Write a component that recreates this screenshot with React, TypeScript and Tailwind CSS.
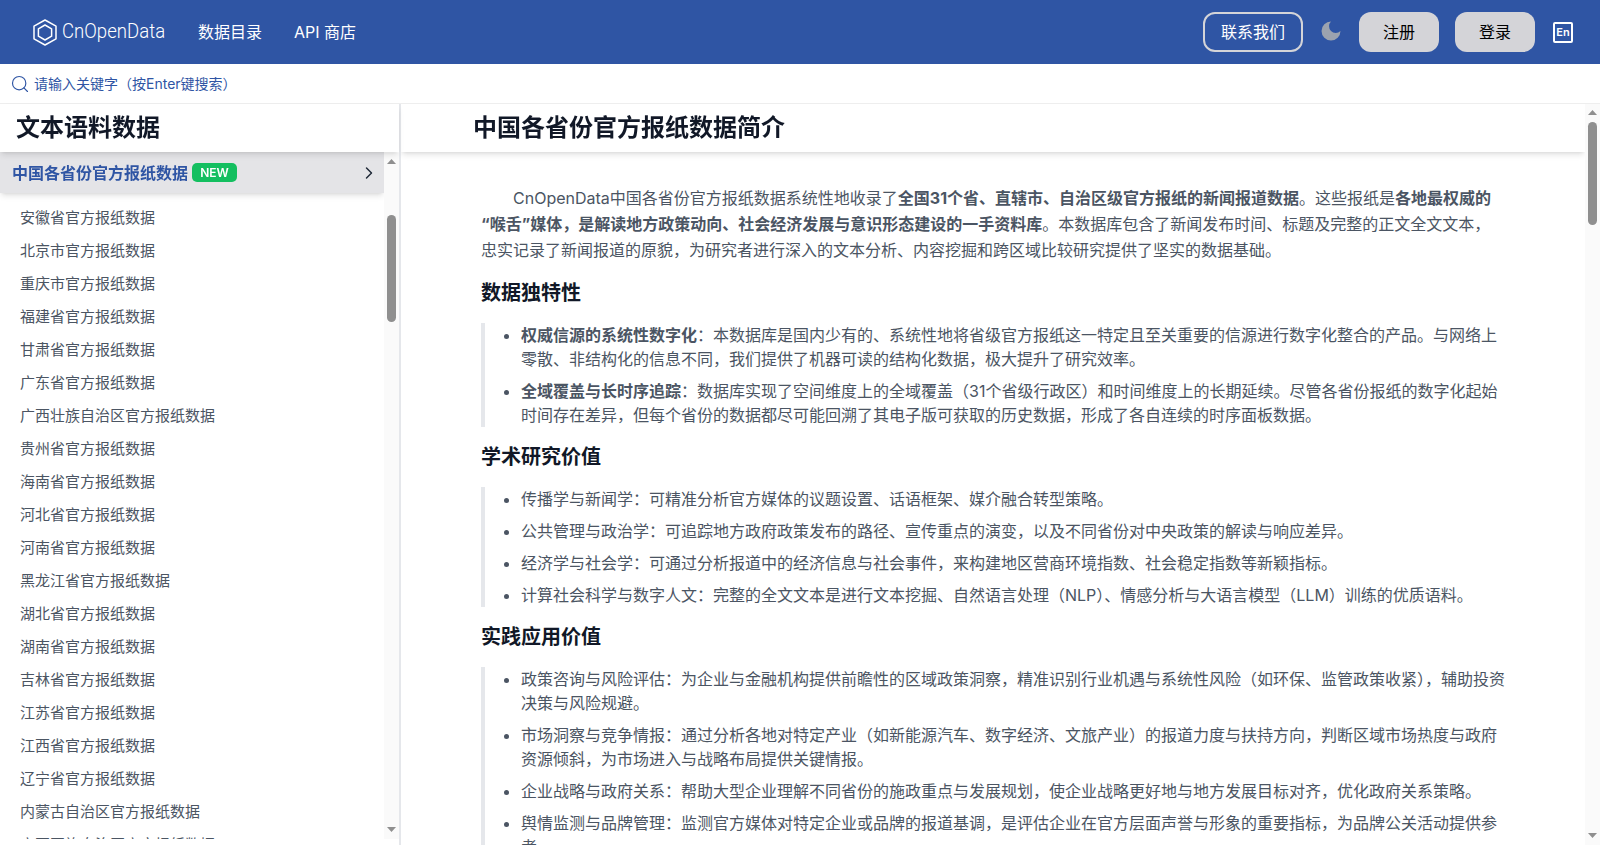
import { ChevronRight, Search } from "lucide-react";

const provinces = [
  "安徽省", "北京市", "重庆市", "福建省", "甘肃省", "广东省", "广西壮族自治区", "贵州省", "海南省", "河北省",
  "河南省", "黑龙江省", "湖北省", "湖南省", "吉林省", "江苏省", "江西省", "辽宁省", "内蒙古自治区", "宁夏回族自治区",
  "青海省", "山东省", "山西省", "陕西省", "上海市", "四川省", "天津市", "西藏自治区", "新疆维吾尔自治区", "云南省", "浙江省",
];

function Logo() {
  return (
    <svg width="24" height="27" viewBox="0 0 24 27" fill="none" stroke="white" strokeWidth="1.5" strokeLinejoin="round">
      <path d="M12 1 L23 7.2 V19.8 L12 26 L1 19.8 V7.2 Z" />
      <path d="M12 6 L18.6 9.8 V17.2 L12 21 L5.4 17.2 V9.8 Z" />
    </svg>
  );
}

function Header() {
  return (
    <header className="h-16 shrink-0 bg-[#2f55a4] flex items-center text-white pl-[33px] pr-[27px]">
      <Logo />
      <span className="ml-[5px] w-[104px] font-['Roboto',sans-serif] font-[350] text-[21px] whitespace-nowrap origin-left scale-x-[.885]">CnOpenData</span>
      <nav className="ml-8 flex items-center gap-8 text-base">
        <a>数据目录</a>
        <a>API 商店</a>
      </nav>
      <div className="flex-1" />
      <button className="h-10 w-[100px] rounded-xl border-2 border-[#d4d4d8] text-base">联系我们</button>
      <svg className="ml-[18px] mb-[3px]" width="20" height="20" viewBox="2.5 2.5 19 19" fill="#9ca3af">
        <path d="M12 3a6 6 0 0 0 9 9 9 9 0 1 1-9-9Z" />
      </svg>
      <button className="ml-[18px] h-10 w-20 rounded-xl bg-[#d4d4d8] text-black text-base">注册</button>
      <button className="ml-4 h-10 w-20 rounded-xl bg-[#d4d4d8] text-black text-base">登录</button>
      <span className="ml-[18px] w-5 h-[21px] rounded-[2px] border-2 border-white flex items-center justify-center text-[11px] leading-none font-semibold">En</span>
    </header>
  );
}

// scrollbar as the page shows it: pale track, two small triangles, rounded thumb
function ScrollTrack({ thumb, inset }: { thumb: string; inset: string }) {
  return (
    <div className={`absolute right-0 bottom-0 w-[15px] bg-[#fafafa] z-20 ${inset}`}>
      <svg className="absolute top-[6px] left-[3px]" width="9" height="5" viewBox="0 0 9 5" fill="#8f8f8f"><path d="M4.5 0 L9 5 H0 Z" /></svg>
      <div className={`absolute left-[3px] w-[9px] rounded-full bg-[#8f8f8f] ${thumb}`} />
      <svg className="absolute bottom-[7px] left-[3px]" width="9" height="5" viewBox="0 0 9 5" fill="#8f8f8f"><path d="M4.5 5 L9 0 H0 Z" /></svg>
    </div>
  );
}

function Sidebar() {
  return (
    <aside className="w-[401px] shrink-0 border-r-2 border-[#e5e7eb] flex flex-col pb-[6px]">
      <h2 className="h-12 shrink-0 pl-4 flex items-center text-2xl font-bold text-[#111827] shadow-md relative z-30 bg-white">文本语料数据</h2>
      <div className="relative flex-1 min-h-0 pr-[15px]">
        <div className="h-full overflow-y-auto [scrollbar-width:none]">
          <div className="sticky top-0 z-10 h-[41px] bg-[#e4e4e7] shadow-md flex items-center pl-3 pr-[5px]">
            <span className="text-base font-semibold text-[#2f55a4]">中国各省份官方报纸数据</span>
            <span className="ml-1 h-[19px] w-[45px] rounded-[5px] bg-[#14bf60] text-white text-[12px] font-semibold flex items-center justify-center">NEW</span>
            <div className="flex-1" />
            <ChevronRight size={20} strokeWidth={1.75} className="text-[#1f2937]" />
          </div>
          <ul className="pt-[9px]">
            {provinces.map((p) => (
              <li key={p} className="h-[33px] pl-5 flex items-center text-[15px] text-[#4b5563]">{p}官方报纸数据</li>
            ))}
          </ul>
        </div>
        <ScrollTrack inset="top-px" thumb="top-[62px] h-[107px]" />
      </div>
    </aside>
  );
}

function Section({ title, items }: { title: string; items: React.ReactNode[] }) {
  return (
    <section className="mt-4">
      <h3 className="text-xl leading-7 font-semibold text-[#111827]">{title}</h3>
      <ul className="mt-4 border-l-4 border-[#e5e7eb] pl-9 list-disc flex flex-col gap-2 leading-6">
        {items.map((item, i) => <li key={i}>{item}</li>)}
      </ul>
    </section>
  );
}

export default function App() {
  return (
    <div className="h-screen pb-4 flex flex-col bg-white font-['Inter','Noto_Sans_CJK_SC',sans-serif] overflow-hidden">
      <Header />
      <div className="h-10 shrink-0 border-b border-[#eeeeee] flex items-center pl-[10px] gap-1 text-[#2f55a4]">
        <Search size={20} strokeWidth={1.4} />
        <input className="flex-1 outline-none text-sm placeholder:text-[#2f55a4]" placeholder="请输入关键字（按Enter键搜索）" />
      </div>
      <div className="flex-1 min-h-0 flex">
        <Sidebar />
        <div className="relative flex-1 min-w-0 pr-[15px]">
          <main className="h-full overflow-y-auto [scrollbar-width:none]">
            <div className="sticky top-0 z-10 h-12 bg-white shadow-md flex items-center">
              <h1 className="w-[1040px] mx-auto text-2xl font-bold text-[#111827]">中国各省份官方报纸数据简介</h1>
            </div>
            <article className="max-w-5xl mx-auto pt-[33px] text-base text-[#4b5563]">
              <p className="indent-8 leading-[26px]">
                CnOpenData中国各省份官方报纸数据系统性地收录了<strong>全国31个省、直辖市、自治区级官方报纸的新闻报道数据</strong>。这些报纸是<strong>各地最权威的<wbr />“喉舌”媒体，是解读地方政策动向、社会经济发展与意识形态建设的一手资料库</strong>。本数据库包含了新闻发布时间、标题及完整的正文全文文本，忠实记录了新闻报道的原貌，为研究者进行深入的文本分析、内容挖掘和跨区域比较研究提供了坚实的数据基础。
              </p>
              <Section title="数据独特性" items={[
                <><strong>权威信源的系统性数字化</strong>：本数据库是国内少有的、系统性地将省级官方报纸这一特定且至关重要的信源进行数字化整合的产品。与网络上零散、非结构化的信息不同，我们提供了机器可读的结构化数据，极大提升了研究效率。</>,
                <><strong>全域覆盖与长时序追踪</strong>：数据库实现了空间维度上的全域覆盖（31个省级行政区）和时间维度上的长期延续。尽管各省份报纸的数字化起始时间存在差异，但每个省份的数据都尽可能回溯了其电子版可获取的历史数据，形成了各自连续的时序面板数据。</>,
              ]} />
              <Section title="学术研究价值" items={[
                "传播学与新闻学：可精准分析官方媒体的议题设置、话语框架、媒介融合转型策略。",
                "公共管理与政治学：可追踪地方政府政策发布的路径、宣传重点的演变，以及不同省份对中央政策的解读与响应差异。",
                "经济学与社会学：可通过分析报道中的经济信息与社会事件，来构建地区营商环境指数、社会稳定指数等新颖指标。",
                "计算社会科学与数字人文：完整的全文文本是进行文本挖掘、自然语言处理（NLP）、情感分析与大语言模型（LLM）训练的优质语料。",
              ]} />
              <Section title="实践应用价值" items={[
                "政策咨询与风险评估：为企业与金融机构提供前瞻性的区域政策洞察，精准识别行业机遇与系统性风险（如环保、监管政策收紧），辅助投资决策与风险规避。",
                "市场洞察与竞争情报：通过分析各地对特定产业（如新能源汽车、数字经济、文旅产业）的报道力度与扶持方向，判断区域市场热度与政府资源倾斜，为市场进入与战略布局提供关键情报。",
                "企业战略与政府关系：帮助大型企业理解不同省份的施政重点与发展规划，使企业战略更好地与地方发展目标对齐，优化政府关系策略。",
                "舆情监测与品牌管理：监测官方媒体对特定企业或品牌的报道基调，是评估企业在官方层面声誉与形象的重要指标，为品牌公关活动提供参考。",
              ]} />
            </article>
          </main>
          <ScrollTrack inset="top-0" thumb="top-[18px] h-[103px]" />
        </div>
      </div>
    </div>
  );
}
